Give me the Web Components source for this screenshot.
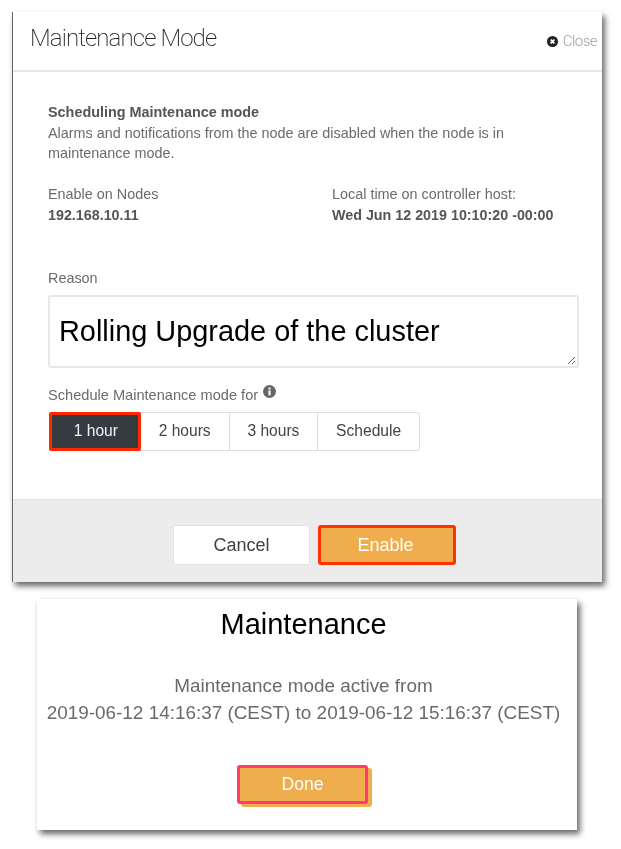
<!DOCTYPE html>
<html lang="en"><head><meta charset="utf-8"><title>Maintenance Mode</title>
<style>
html,body{margin:0;background:#fff}
body{width:621px;height:849px;overflow:hidden;font-family:"Liberation Sans",Arial,sans-serif;color:#666;filter:blur(.4px)}
</style></head><body>
<maint-dialog>
  <dialog-section slot="intro">
    <strong>Scheduling Maintenance mode</strong><br>Alarms and notifications from the node are disabled when the node is in maintenance mode.
  </dialog-section>
  <info-pair slot="left" label="Enable on Nodes" value="192.168.10.11"></info-pair>
  <info-pair slot="right" label="Local time on controller host:" value="Wed Jun 12 2019 10:10:20 -00:00"></info-pair>
</maint-dialog>
<result-card></result-card>
<script>
function def(name, html, init){
  customElements.define(name, class extends HTMLElement{
    constructor(){super();this.attachShadow({mode:'open'}).innerHTML=html;}
    connectedCallback(){ if(init) init.call(this,this.shadowRoot); }
  });
}
def('dialog-section',`<style>:host{display:block;font-size:14.4px;line-height:20.5px;color:#6b6b6b}::slotted(strong){color:#555;font-weight:700}</style><slot></slot>`);
def('info-pair',`<style>:host{display:block;font-size:14.4px;line-height:21px;color:#6b6b6b}b{color:#555;display:block;font-size:14.3px}</style><div id="l"></div><b id="v"></b>`,function(s){
  s.getElementById('l').textContent=this.getAttribute('label');
  s.getElementById('v').textContent=this.getAttribute('value');
});
def('action-button',`<style>
:host{box-sizing:border-box;height:40px;width:var(--w,137px);border-radius:3px;font-size:18px;display:flex;align-items:center;justify-content:center;background:#fff;color:#3e4246;border:1px solid #e2e2e2}
:host([primary]){background:#f0ad4e;color:#fff;border:3px solid var(--ring,#ff3300);padding-right:var(--pr,3px)}
</style><slot></slot>`);
def('segment-group',`<style>
:host{display:flex;height:39px;box-sizing:border-box;width:371px;border:1px solid #dcdcdc;border-radius:3px;font-size:15.6px;color:#444;position:relative}
</style><slot></slot>`);
def('segment-item',`<style>
:host{box-sizing:border-box;display:flex;align-items:center;justify-content:center;border-left:1px solid #dcdcdc;width:var(--w,88px);height:100%}
:host([active]){background:#353c40;color:#f2f2f2;border:3px solid #ff2a00;margin:-1px 0 -1px -1px;height:39px;border-radius:2px;padding-left:2px}
</style><slot></slot>`);
def('maint-dialog',`<style>
:host{box-sizing:border-box;margin:12px 0 0 12px;width:590px;height:570px;background:#fff;border-left:1px solid #666;box-shadow:3px 4px 6px rgba(0,0,0,.6);display:flex;flex-direction:column}
header{height:60px;box-sizing:border-box;border-bottom:2px solid #e7e7e7;display:flex;justify-content:space-between;padding:12px 5px 0 17px;flex:none}
h1{margin:0;font:200 24px/28px Roboto,"Liberation Sans",sans-serif;letter-spacing:-.87px;color:#222}
.close{display:flex;align-items:center;gap:5px;height:36px;margin-top:-1px;font:300 15px Roboto,"Liberation Sans",sans-serif;letter-spacing:-.55px;color:#a0a0a0}
main{flex:1;padding:30px 24px 0 35px;min-height:0}
.cols{display:grid;grid-template-columns:284px 1fr;margin-top:20px}
.reason{margin-top:42px;font-size:14.4px;line-height:20px;color:#6b6b6b}
.ta{box-sizing:border-box;margin-top:7px;height:73px;width:531px;border:2px solid #e8e8e8;border-radius:3px;padding:18px 9px;font-size:28.9px;line-height:32px;color:#000;position:relative}
.ta svg{position:absolute;right:1px;bottom:1px}
.sched{margin-top:17px;font-size:14.6px;line-height:20px;color:#6b6b6b;display:flex;align-items:flex-start;gap:5px}
segment-group{margin-top:7px;margin-left:1px}
footer{flex:none;height:83px;box-sizing:border-box;background:#ececec;border-top:1px solid #e4e4e4;padding-top:25px;display:flex;justify-content:center;gap:8px;padding-left:14px}
</style>
<header><h1>Maintenance Mode</h1><div class="close"><svg width="11" height="11" viewBox="0 0 12 12"><circle cx="6" cy="6" r="6" fill="#222"/><path d="M4 4l4 4M8 4l-4 4" stroke="#fff" stroke-width="2"/></svg>Close</div></header>
<main>
<slot name="intro"></slot>
<div class="cols"><slot name="left"></slot><slot name="right"></slot></div>
<div class="reason">Reason</div>
<div class="ta">Rolling Upgrade of the cluster<svg width="10" height="10" viewBox="0 0 10 10"><path d="M9 2L2 9M9 6L6 9" stroke="#666" stroke-width="1"/></svg></div>
<div class="sched">Schedule Maintenance mode for <svg width="13" height="13" viewBox="0 0 12 12"><circle cx="6" cy="6" r="6" fill="#666"/><rect x="5" y="5" width="2" height="4.5" fill="#fff"/><rect x="5" y="2.4" width="2" height="1.7" fill="#fff"/></svg></div>
<segment-group><segment-item active style="--w:92px">1 hour</segment-item><segment-item style="--w:88px;border-left:0">2 hours</segment-item><segment-item style="--w:89px">3 hours</segment-item><segment-item style="--w:102px">Schedule</segment-item></segment-group>
</main>
<footer><action-button>Cancel</action-button><action-button primary style="--w:138px">Enable</action-button></footer>`);
def('result-card',`<style>
:host{display:block;box-sizing:border-box;margin:17px 0 0 37px;width:540px;height:231px;background:#fff;box-shadow:3px 4px 6px rgba(0,0,0,.6);text-align:center;padding:9px 7px 0 0}
h2{margin:0;font-weight:400;font-size:29px;line-height:32px;color:#000}
p{margin:32px 0 0;font-size:18.9px;line-height:27px;color:#6a6a6a}
action-button{margin:39px auto 0 200px;--w:131px;--ring:#ff3b6b;--pr:0px;height:39px;font-size:17.6px;box-shadow:4px 3px 0 #f0ad4e}
</style>
<h2>Maintenance</h2>
<p>Maintenance mode active from<br>2019-06-12 14:16:37 (CEST) to 2019-06-12 15:16:37 (CEST)</p>
<action-button primary>Done</action-button>`);
</script>
</body></html>
